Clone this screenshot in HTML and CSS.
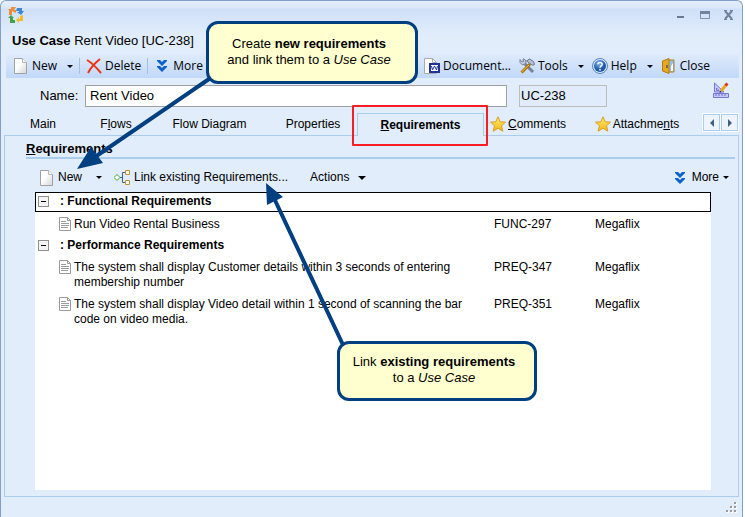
FILE: index.html
```html
<!DOCTYPE html>
<html lang="en">
<head>
<meta charset="utf-8">
<title>Use Case Rent Video [UC-238]</title>
<link rel="stylesheet" href="styles.css">
</head>
<body>
<svg class="defs" width="0" height="0" aria-hidden="true">
  <defs>
    <linearGradient id="paper" x1="0" y1="0" x2="1" y2="1"><stop offset=".4" stop-color="#fff"/><stop offset="1" stop-color="#d5d5d5"/></linearGradient>
    <linearGradient id="gold" x1="0" y1="0" x2="0" y2="1"><stop offset="0" stop-color="#fff06a"/><stop offset="1" stop-color="#f3b51b"/></linearGradient>
    <radialGradient id="ball" cx=".4" cy=".3"><stop offset="0" stop-color="#83b8ee"/><stop offset="1" stop-color="#1c5aa8"/></radialGradient>
  </defs>
  <symbol id="i-page" viewBox="0 0 16 16"><path d="M1.500 .5h8l4 4v11h-12z" fill="url(#paper)" stroke="#a2a2a2"/><path d="M9.500 .5v4h4" fill="#fff" stroke="#b5b5b5"/></symbol>
  <symbol id="i-chevrons" viewBox="0 0 16 16"><path d="M3 2h3l2 2 2-2h3v1L8 8 3 3zM3 8h3l2 2 2-2h3v1l-5 5-5-5z" fill="#0c62cc"/></symbol>
  <symbol id="i-star" viewBox="0 0 16 16"><path d="M8 .8l2.200 5 5.300.4-4 3.500 1.300 5.500L8 12.300 3.200 15.200l1.300-5.500-4-3.500 5.300-.4z" fill="url(#gold)" stroke="#d99e22"/></symbol>
  <symbol id="i-doc" viewBox="0 0 12 14"><path d="M.5 .5h8l3 3v10H.5z" fill="#fff" stroke="#9b9b9b"/><path d="M8.500 .5v3h3M2 4.500h5M2 6.500h8M2 8.500h8M2 10.500h7" fill="none" stroke="#9b9b9b"/></symbol>
</svg>

<div class="window">
  <header class="titlebar">
    <svg class="i16" viewBox="0 0 16 16" aria-hidden="true">
      <path d="M1 8V3l-1-1h3V0h5L6 3h2v3L4 4v4z" fill="#f18c35"/>
      <path d="M9 1h5v3h2l-3 4-4-3h2V4H8z" fill="#3e86d6"/>
      <path d="M15 8v6h-4v2L8 13l3-3v2h1V9z" fill="#f2bc22"/>
      <path d="M3 8l3 3H5v2h2v3H2v-5H0z" fill="#46a24a"/>
    </svg>
    <div class="window-buttons">
      <button aria-label="Minimize"><svg width="10" height="10" viewBox="0 0 10 10"><path d="M1 6h7v2H1z" fill="#6a7a90"/></svg></button>
      <button aria-label="Maximize"><svg width="10" height="10" viewBox="0 0 10 10"><path d="M.5 1.500h9v7h-9z" fill="none" stroke="#7f90a8"/><path d="M0 1h10v3H0z" fill="#71839c"/></svg></button>
      <button aria-label="Close window"><svg width="10" height="10" viewBox="0 0 10 10"><path d="M1 1l7 8M8 1L1 9" stroke="#71839c" stroke-width="2"/><path d="M0 .5h3M6 .5h3M0 9.500h3M6 9.500h3" stroke="#71839c"/></svg></button>
    </div>
  </header>

  <h1 class="heading"><b>Use Case</b> Rent Video [UC-238]</h1>

  <nav class="toolbar" aria-label="Use case">
    <button><svg class="i16"><use href="#i-page"/></svg>New<i class="caret"></i></button>
    <span class="divider"></span>
    <button><svg class="i16" viewBox="0 0 16 16"><path d="M1 2c5 3 9 7 14 13M14 1C9 5 5 9 2 15" fill="none" stroke="#ee3418" stroke-width="2"/></svg>Delete</button>
    <span class="divider"></span>
    <button><svg class="i16"><use href="#i-chevrons"/></svg>More</button>
    <span class="stretch"></span>
    <button><svg class="i16" viewBox="0 0 16 16"><path d="M.5 .5h8l4 4v11H.5z" fill="#fff" stroke="#aaa"/><path d="M8.500 .5v4h4" fill="none" stroke="#aaa"/><path d="M6 6h9v8H6z" fill="#fff" stroke="#20339a" stroke-width="2"/><path d="M7.500 8l1 4 2-4 2 4 1-4" fill="none" stroke="#20339a"/></svg>Document...</button>
    <button><svg class="i16" viewBox="0 0 16 16"><path d="M4 4l10 10" stroke="#77829b" stroke-width="3"/><path d="M1 1.500v3L3.500 7 7 5.500 6.500 2 4 .8l.5 2.700L3 4z" fill="#c6cfe0" stroke="#77829b"/><path d="M11 6l-8.500 8.500" stroke="#a87410" stroke-width="3"/><path d="M10 7l-7.500 7" stroke="#f0c341"/><path d="M7.500 3l3-2 4 2.500 1 3-2 .8L9 4z" fill="#b9c3d8" stroke="#68748f"/></svg>Tools<i class="caret"></i></button>
    <button><svg class="i16" viewBox="0 0 16 16"><circle cx="8" cy="8" r="7.500" fill="#d9e8f8" stroke="#5c86b9"/><circle cx="8" cy="8" r="6" fill="url(#ball)"/><path d="M5.800 6.200C6 3.600 10.500 4 10.200 6.500 10 8 8 8 8 9.800M8 11v1.500" fill="none" stroke="#fff" stroke-width="1.500"/></svg>Help<i class="caret"></i></button>
    <button><svg class="i16" viewBox="0 0 16 16"><path d="M7 2h6v12H7z" fill="#8ec1ee" stroke="#b88115"/><path d="M10 8l2-3v8h-2z" fill="#f7fbff"/><path d="M1.500 3L8 .5v15L1.500 13z" fill="#e8a822" stroke="#b77b0c"/><path d="M5 7h2v3H5z" fill="#856b38"/></svg>Close</button>
  </nav>

  <div class="name-row">
    <label for="name">Name:</label>
    <input id="name" class="name" type="text" value="Rent Video">
    <input class="code" type="text" value="UC-238" readonly aria-label="Identifier">
    <button class="edit" aria-label="Edit"><svg class="i16" viewBox="0 0 16 16"><path d="M1.500 1v9H11z" fill="#c8caff" stroke="#7377da"/><path d="M3.500 6v2.500H6z" fill="#fff" stroke="#7377da"/><path d="M.5 11.500h15v4H.5z" fill="#c8caff" stroke="#7377da"/><path d="M3 12v2M6 12v2M9 12v2M12 12v2" stroke="#666bd2"/><path d="M13.500 2.500L8 9" stroke="#eda51d" stroke-width="3"/><path d="M12.500 1.500l2 2" stroke="#d33a26" stroke-width="3"/><path d="M6.500 11l.5-2.500L8.500 10z" fill="#333"/></svg></button>
  </div>

  <div class="tabs" role="tablist">
    <button role="tab">Main</button>
    <button role="tab"><span>F<u>l</u>ows</span></button>
    <button role="tab"><span>Flow Dia<u>g</u>ram</span></button>
    <button role="tab">Properties</button>
    <button role="tab" class="active" aria-selected="true"><span><u>R</u>equirements</span><span class="highlight"></span></button>
    <button role="tab"><svg class="i16"><use href="#i-star"/></svg><span><u>C</u>omments</span></button>
    <button role="tab"><svg class="i16"><use href="#i-star"/></svg><span>Attachme<u>n</u>ts</span></button>
    <div class="pager">
      <button aria-label="Previous tabs"><svg width="4" height="8" viewBox="0 0 4 8"><path d="M4 0v8L0 4z" fill="#405f88"/></svg></button>
      <button aria-label="Next tabs"><svg width="4" height="8" viewBox="0 0 4 8"><path d="M0 0v8l4-4z" fill="#405f88"/></svg></button>
    </div>
  </div>

  <main class="panel">
    <h2><u>R</u>equirements</h2>
    <nav class="subbar" aria-label="Requirements">
      <button class="new"><svg class="i16"><use href="#i-page"/></svg>New<i class="caret"></i></button>
      <button><svg class="i16" viewBox="0 0 16 16"><path d="M0 7.500L3 4.500l3 3-3 3z" fill="#fff" stroke="#36a336"/><path d="M6 7.500h2.500M11 2.500H8.500v10H11" fill="none" stroke="#3d618d"/><path d="M11.500 .5h4v4h-4zM11.500 10.500h4v4h-4z" fill="#fff" stroke="#c49330"/></svg>Link existing Requirements...</button>
      <button class="actions">Actions<i class="caret"></i></button>
      <span class="stretch"></span>
      <button class="more"><svg class="i16"><use href="#i-chevrons"/></svg>More<i class="caret"></i></button>
    </nav>
    <div class="list">
      <table>
        <colgroup><col class="c-icon"><col class="c-text"><col class="c-id"><col></colgroup>
        <tbody>
          <tr class="group selected"><th colspan="4"><button class="toggle" aria-label="Collapse"></button>: Functional Requirements</th></tr>
          <tr><td><svg class="doc"><use href="#i-doc"/></svg></td><td>Run Video Rental Business</td><td>FUNC-297</td><td>Megaflix</td></tr>
          <tr class="group"><th colspan="4"><button class="toggle" aria-label="Collapse"></button>: Performance Requirements</th></tr>
          <tr><td><svg class="doc"><use href="#i-doc"/></svg></td><td>The system shall display Customer details within 3 seconds of entering membership number</td><td>PREQ-347</td><td>Megaflix</td></tr>
          <tr><td><svg class="doc"><use href="#i-doc"/></svg></td><td>The system shall display Video detail within 1 second of scanning the bar code on video media.</td><td>PREQ-351</td><td>Megaflix</td></tr>
        </tbody>
      </table>
    </div>
  </main>

  <footer class="statusbar"><svg width="11" height="11" viewBox="0 0 11 11" aria-hidden="true"><path d="M9 1h2v2H9zM5 5h2v2H5zM9 5h2v2H9zM1 9h2v2H1zM5 9h2v2H5zM9 9h2v2H9z" fill="#fff"/><path d="M8 0h2v2H8zM4 4h2v2H4zM8 4h2v2H8zM0 8h2v2H0zM4 8h2v2H4zM8 8h2v2H8z" fill="#9a9a9a"/></svg></footer>

  <svg class="arrows" width="743" height="517" viewBox="0 0 743 517" aria-hidden="true">
    <path d="M212 77L92 159M344 347L273 196" fill="none" stroke="#003f80" stroke-width="4"/>
    <path d="M77 169l14-22 12 16zM266 183l17 14-16 8z" fill="#003f80"/>
  </svg>
  <div class="callout create">Create <b>new requirements</b><br>and link them to a <em>Use Case</em></div>
  <div class="callout link">Link <b>existing requirements</b><br>to a <em>Use Case</em></div>
</div>
</body>
</html>
```
FILE: styles.css
```css
* { box-sizing: border-box; }

body {
  margin: 0;
  background: #fff;
  color: #000;
  font: 12px/15px "Liberation Sans", Arial, sans-serif;
}

button, input {
  font: inherit;
  color: inherit;
}

button {
  display: flex;
  align-items: center;
  padding: 0;
  border: 0;
  background: none;
  white-space: nowrap;
}

svg { display: block; flex: none; }
.defs { position: absolute; }
.i16 { width: 16px; height: 16px; }
.stretch { flex: 1; }

.window {
  position: relative;
  display: flex;
  flex-direction: column;
  min-height: 100vh;
  margin-right: 2px;
  padding: 0 3px;
  border: 1px solid #829ec9;
  border-bottom: 0;
  border-radius: 6px 6px 0 0;
  background: linear-gradient(#e3eefc 0, #dbe8fb 7px, #cfe0f9 8px, #e1edfb 34px);
}

.titlebar {
  display: flex;
  justify-content: space-between;
  align-items: center;
  height: 28px;
  padding: 0 5px 0 4px;
}

.window-buttons { display: flex; gap: 14px; }

.heading {
  margin: 0;
  padding: 2px 8px 0;
  height: 25px;
  font: 13px/20px "Liberation Sans", Arial, sans-serif;
}

.toolbar {
  display: flex;
  align-items: center;
  height: 24px;
  margin-left: 2px;
  padding: 0 29px 0 7px;
  background: linear-gradient(#dfebfc, #c1d8f8);
  font: 12px/16px "Open Sans", "Noto Sans", sans-serif;
}

.toolbar button { gap: 3px; }
.toolbar .stretch ~ button + button { margin-left: 8px; }

.divider {
  width: 1px;
  height: 16px;
  margin: 0 6px;
  background: #a6bfe2;
}

.caret {
  width: 6px;
  margin-left: 7px;
  border: 3px solid transparent;
  border-top-color: #000;
  border-bottom: 0;
}

.name-row {
  display: flex;
  align-items: center;
  height: 35px;
  padding: 0 10px 0 36px;
  font-size: 13px;
}

.name-row label { width: 45px; }

.name-row input {
  height: 22px;
  padding: 0 4px;
  border: 1px solid #a0a0a0;
  border-radius: 0;
  background: #fff;
}

.name-row .name { flex: 1; min-width: 0; }

.name-row .code {
  width: 88px;
  margin-left: 12px;
  padding: 0 1px;
  border-color: #bdbdbd;
  background: #e0ecfb;
}

.edit { margin: 0 0 12px 106px; }

.tabs {
  display: flex;
  align-items: flex-end;
  height: 22px;
}

.tabs > button {
  justify-content: center;
  gap: 2px;
  height: 22px;
  width: 78px;
}

.tabs > button:nth-child(2) { width: 68px; }
.tabs > button:nth-child(3) { width: 119px; }
.tabs > button:nth-child(4) { width: 88px; }
.tabs > button:nth-child(6) { width: 88px; }
.tabs > button:nth-child(7) { width: 130px; }

.tabs > .active {
  position: relative;
  z-index: 1;
  width: 127px;
  height: 23px;
  margin-bottom: -1px;
  border: 1px solid #a9cdec;
  border-bottom: 0;
  background: #e1edfb;
  font-weight: bold;
}

.highlight {
  position: absolute;
  inset: -9px -5px -10px -6px;
  border: 2px solid #f81d22;
  border-radius: 1px;
}

.pager {
  display: flex;
  gap: 1px;
  align-self: flex-start;
  margin-left: auto;
  padding: 1px;
  background: #fff;
}

.pager button {
  justify-content: center;
  width: 17px;
  height: 17px;
  border: 1px solid #a9cdec;
  background: #edf4fd;
}

.panel {
  flex: 1;
  display: flex;
  flex-direction: column;
  padding: 4px 3px 6px 21px;
  border: 1px solid #a9cdec;
  background: #e1edfb;
}

h2 {
  margin: 0;
  height: 19px;
  border-bottom: 2px solid #a9cdec;
  font-size: 13px;
  line-height: 17px;
}

.subbar {
  display: flex;
  align-items: center;
  gap: 12px;
  height: 33px;
  padding: 4px 6px 0 13px;
}

.subbar button { gap: 4px; }
.subbar .new { gap: 3px; }
.subbar .new .caret { margin-left: 11px; }
.subbar .actions { margin-left: 10px; }
.subbar .actions .caret { width: 8px; border-width: 4px 4px 0; margin-left: 5px; }
.subbar .more .caret { margin-left: 0; }

.list {
  flex: 1;
  margin: 0 24px 0 9px;
  background: #fff;
}

table {
  width: 100%;
  table-layout: fixed;
  border-collapse: separate;
  border-spacing: 0;
}

.c-icon { width: 39px; }
.c-text { width: 420px; }
.c-id { width: 101px; }

td, th {
  padding: 5px 0 2px;
  text-align: left;
  vertical-align: top;
}

td:nth-child(2) { padding-right: 12px; }
td:first-child { padding-left: 24px; }
.doc { width: 12px; height: 14px; }

th {
  padding: 4px 3px 2px;
  font-weight: bold;
}

.selected th {
  padding: 1px 2px 2px;
  border: 1px solid #000;
}

.toggle {
  display: inline-flex;
  justify-content: center;
  width: 11px;
  height: 11px;
  margin-right: 11px;
  border: 1px solid #8f8f8f;
  background: #f4f4f4;
  vertical-align: middle;
}

.toggle::before {
  content: "";
  width: 5px;
  height: 1px;
  background: #000;
}

.statusbar {
  display: flex;
  justify-content: flex-end;
  height: 20px;
  padding: 5px 2px 0;
}

.arrows {
  position: absolute;
  top: -1px;
  left: -1px;
  z-index: 2;
  pointer-events: none;
}

.callout {
  position: absolute;
  z-index: 3;
  display: flow-root;
  border: 3px solid #003f80;
  border-radius: 12px;
  background: #ffffcf;
  font-size: 13px;
  line-height: 16px;
  text-align: center;
  white-space: nowrap;
}

.create {
  top: 20px;
  left: 205px;
  width: 212px;
  height: 63px;
  padding: 12px 6px 0 0;
}

.link {
  top: 340px;
  left: 336px;
  width: 200px;
  height: 60px;
  padding: 10px 6px 0 0;
}
```
